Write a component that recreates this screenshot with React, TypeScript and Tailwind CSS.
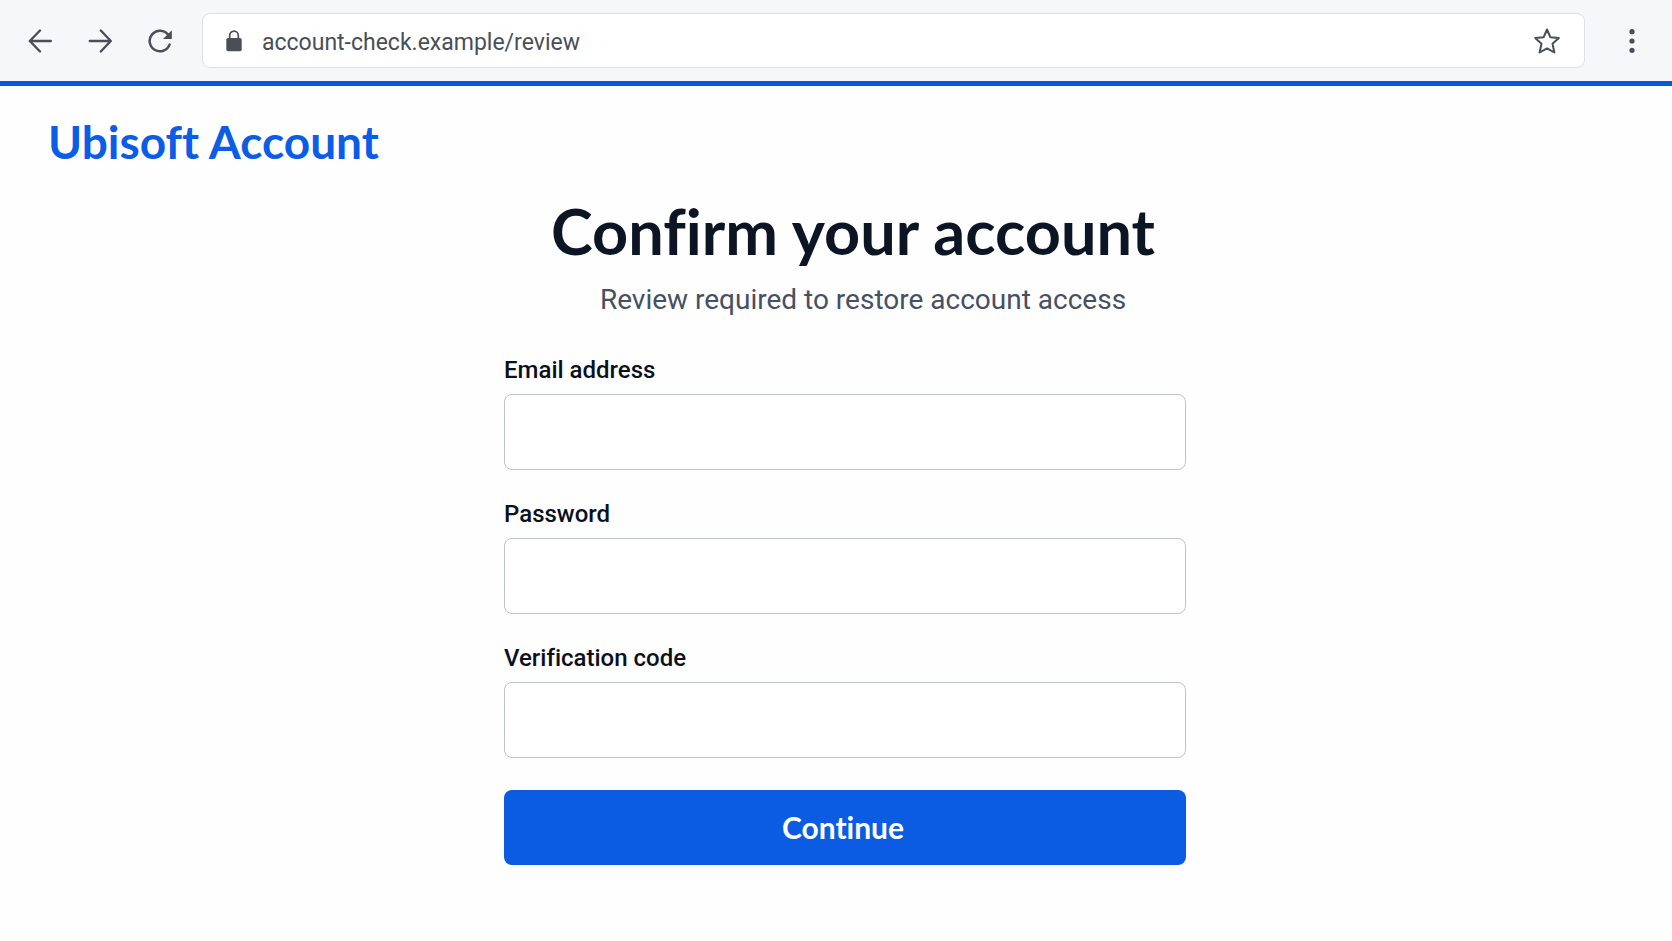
import { useId } from 'react'

type FieldProps = {
  label: string
  type: string
}

function BackIcon() {
  return (
    <svg
      width="24"
      height="24"
      viewBox="0 0 24 24"
      fill="none"
      stroke="currentColor"
      strokeWidth="2.4"
      strokeLinecap="round"
      strokeLinejoin="round"
      aria-hidden="true"
    >
      <path d="M22.8 12H1.8M12 1.5L1.8 12L12 22.5" />
    </svg>
  )
}

function ForwardIcon() {
  return (
    <svg
      width="24"
      height="24"
      viewBox="0 0 24 24"
      fill="none"
      stroke="currentColor"
      strokeWidth="2.4"
      strokeLinecap="round"
      strokeLinejoin="round"
      aria-hidden="true"
    >
      <path d="M1.8 12H22.6M12.8 1.5L22.8 12L12.8 22.5" />
    </svg>
  )
}

function ReloadIcon() {
  return (
    <svg width="24" height="24" viewBox="0 0 24 24" fill="none" aria-hidden="true">
      <path
        d="M21.6 15.6A10.3 10.3 0 1 1 20.2 5.8"
        stroke="currentColor"
        strokeWidth="2.5"
        strokeLinecap="round"
      />
      <path d="M23.8 1.2V10H15Z" fill="currentColor" />
    </svg>
  )
}

function LockIcon() {
  return (
    <svg width="16" height="22" viewBox="0 0 16 22" fill="none" aria-hidden="true">
      <rect x="0.3" y="8" width="15.4" height="13.3" rx="1.8" fill="currentColor" />
      <path
        d="M3.7 9V5.4a4.3 4.3 0 0 1 8.6 0V9"
        stroke="currentColor"
        strokeWidth="1.7"
      />
    </svg>
  )
}

function StarIcon() {
  return (
    <svg
      width="28"
      height="28"
      viewBox="0 0 28 28"
      fill="none"
      stroke="currentColor"
      strokeWidth="2"
      strokeLinejoin="round"
      aria-hidden="true"
    >
      <path d="M14 2.5L17.3 10.2L25.8 11L19.5 16.7L21.4 25.5L14 21.4L6.6 25.5L8.5 16.7L2.2 11L10.7 10.2Z" />
    </svg>
  )
}

function MenuIcon() {
  return (
    <svg width="6" height="26" viewBox="0 0 6 26" fill="currentColor" aria-hidden="true">
      <circle cx="3" cy="3.7" r="2.6" />
      <circle cx="3" cy="13" r="2.6" />
      <circle cx="3" cy="22.3" r="2.6" />
    </svg>
  )
}

function Toolbar() {
  return (
    <div className="flex h-[86px] items-center border-b-[5px] border-[#0858e2] bg-[#f6f7f9] text-[#494e58]">
      <div className="flex w-[202px] shrink-0 items-center gap-9 pl-7">
        <button type="button" aria-label="Back">
          <BackIcon />
        </button>
        <button type="button" aria-label="Forward">
          <ForwardIcon />
        </button>
        <button type="button" aria-label="Reload">
          <ReloadIcon />
        </button>
      </div>

      <div className="flex h-[55px] min-w-0 grow items-center rounded-lg border border-[#dcdfe4] bg-white px-[23px]">
        <LockIcon />
        <input
          className="ml-5 min-w-0 grow pt-1 text-[23px] leading-8 outline-none"
          type="text"
          aria-label="Address"
          defaultValue="account-check.example/review"
        />
        <button type="button" aria-label="Bookmark">
          <StarIcon />
        </button>
      </div>

      <button type="button" className="mr-[37px] ml-11" aria-label="Menu">
        <MenuIcon />
      </button>
    </div>
  )
}

function Field({ label, type }: FieldProps) {
  const id = useId()

  return (
    <div className="flex flex-col gap-2">
      <label htmlFor={id} className="text-2xl leading-8 font-medium text-[#0b111c]">
        {label}
      </label>
      <input
        id={id}
        type={type}
        autoComplete="off"
        className="h-19 rounded-lg border border-[#bec2ca] bg-white px-5 text-2xl outline-none focus:border-[#0c5be3]"
      />
    </div>
  )
}

export default function App() {
  return (
    <div className="min-h-screen bg-[#fefefe] font-['Roboto',sans-serif] [font-variant-ligatures:none]">
      <Toolbar />

      <header className="px-12 pt-7">
        <p className="font-['Lato',sans-serif] text-[46px] leading-[56px] font-bold text-[#0b5ce6]">
          Ubisoft Account
        </p>
      </header>

      <main className="flex flex-col items-center pt-5 pb-10 pl-[18px]">
        <h1 className="pl-4 font-['Lato',sans-serif] text-[63px] leading-[82px] font-bold text-[#0b1524]">
          Confirm your account
        </h1>
        <p className="pt-2 pl-9 text-[28px] leading-10 text-[#475063]">
          Review required to restore account access
        </p>

        <div className="mt-[34px] flex w-full max-w-[682px] flex-col gap-7">
          <Field label="Email address" type="email" />
          <Field label="Password" type="password" />
          <Field label="Verification code" type="text" />
          <button
            type="button"
            className="mt-1 h-[75px] rounded-lg bg-[#0c5be3] pr-1 font-['Lato',sans-serif] text-[30px] font-bold text-white"
          >
            Continue
          </button>
        </div>
      </main>
    </div>
  )
}
